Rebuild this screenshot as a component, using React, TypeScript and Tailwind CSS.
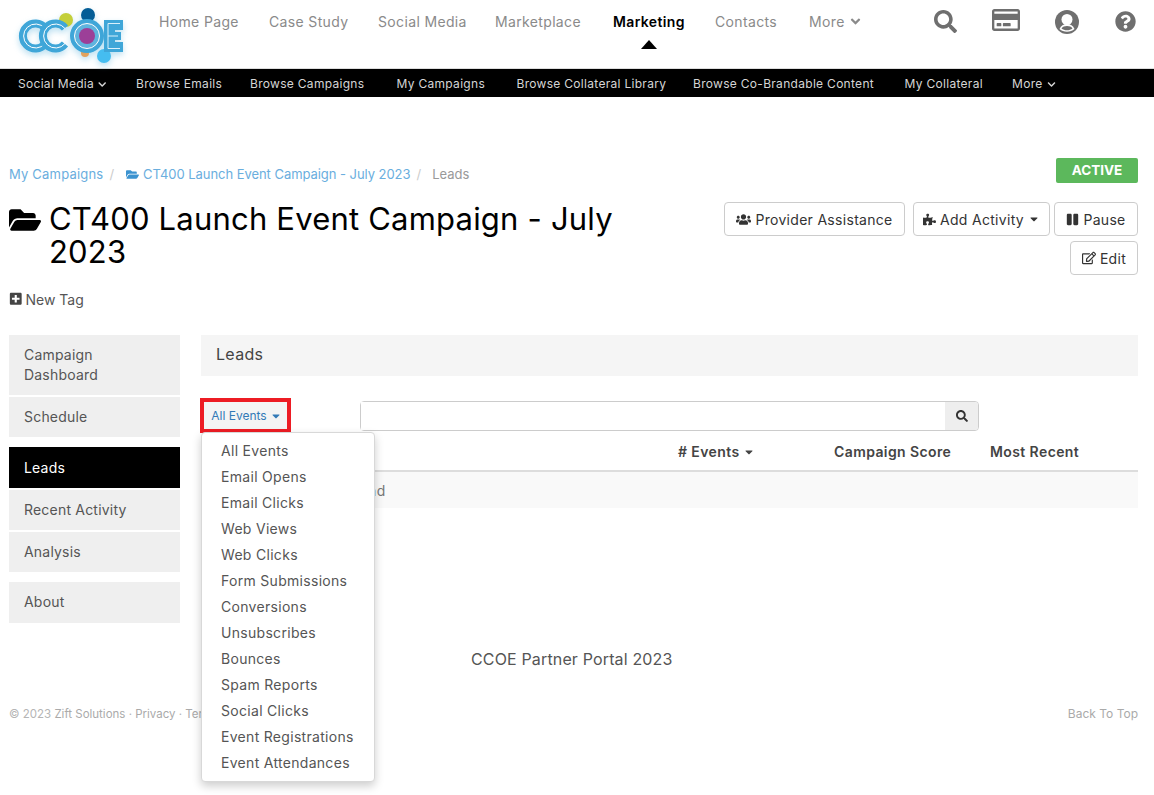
import {
  FaAngleDown,
  FaCaretDown,
  FaChevronDown,
  FaFolderOpen,
  FaPause,
  FaPlusSquare,
  FaPuzzlePiece,
  FaQuestionCircle,
  FaRegCreditCard,
  FaRegEdit,
  FaSearch,
  FaUsers,
} from "react-icons/fa";

const topNav = [
  { label: "Home Page", w: "w-[81px]" },
  { label: "Case Study", w: "w-[80px]" },
  { label: "Social Media", w: "w-[88px]" },
  { label: "Marketplace", w: "w-[87px]" },
];

const subNav = [
  { label: "Social Media", w: "w-[88.5px]", more: true },
  { label: "Browse Emails", w: "w-[84.5px]" },
  { label: "Browse Campaigns", w: "w-[117px]" },
  { label: "My Campaigns", w: "w-[90.5px]" },
  { label: "Browse Collateral Library", w: "w-[147px]" },
  { label: "Browse Co-Brandable Content", w: "w-[182px]" },
  { label: "My Collateral", w: "w-[78px]" },
  { label: "More", w: "w-[48px]", more: true },
];

const menuItems = [
  "All Events",
  "Email Opens",
  "Email Clicks",
  "Web Views",
  "Web Clicks",
  "Form Submissions",
  "Conversions",
  "Unsubscribes",
  "Bounces",
  "Spam Reports",
  "Social Clicks",
  "Event Registrations",
  "Event Attendances",
];

function Logo() {
  return (
    <svg
      width="115"
      height="62"
      viewBox="0 0 115 62"
      className="ml-[16px] mt-[4px] shrink-0 drop-shadow-[0_3px_3px_rgba(63,166,216,0.35)]"
    >
      <circle cx="50" cy="16" r="7" fill="#c4cf3a" />
      <circle cx="72" cy="11" r="7" fill="#045d96" />
      <circle cx="69" cy="49" r="4" fill="#e3a35d" />
      <circle cx="88" cy="52" r="7" fill="#45bdf0" />
      <path d="M29 24A12.500 12.500 0 1 0 29 40" fill="none" stroke="#3fa6d8" strokeWidth="8" />
      <path d="M29 24.500A12 12 0 1 0 29 39.500" fill="none" stroke="#fff" strokeWidth="1" />
      <path d="M49 24A12.500 12.500 0 1 0 49 40" fill="none" stroke="#3fa6d8" strokeWidth="8" />
      <path d="M49 24.500A12 12 0 1 0 49 39.500" fill="none" stroke="#fff" strokeWidth="1" />
      <circle cx="71" cy="32" r="17" fill="#3fa6d8" />
      <circle cx="71" cy="32" r="12.500" fill="#5fb4de" stroke="#fff" strokeWidth="1" />
      <circle cx="71" cy="32" r="8" fill="#9c3f98" />
      <path d="M88 16h19v10h-8v2h6v8h-6v2h8v10H88z" fill="#3fa6d8" />
      <path d="M104 19.500H92v25h12M92 32h10" fill="none" stroke="#d9f0fb" strokeWidth="1" />
    </svg>
  );
}

function UserIcon() {
  return (
    <svg width="24" height="24" viewBox="0 0 24 24">
      <circle cx="12" cy="12" r="12" fill="#6f6f6f" />
      <circle cx="12" cy="9.500" r="5.500" fill="#fff" />
      <path d="M4.500 19c1.500-3.500 4-5 7.500-5s6 1.500 7.500 5c-2 1.800-4.600 2.800-7.500 2.800S6.500 20.800 4.500 19z" fill="#fff" />
      <path d="M6.500 18.500c1.200-1.600 3-2.400 5.500-2.400s4.300.8 5.500 2.400c-1.500 1.200-3.400 1.800-5.500 1.800s-4-.6-5.500-1.800z" fill="#6f6f6f" />
    </svg>
  );
}

function Header() {
  return (
    <header className="flex h-[69px] border-b border-[#ddd] bg-white">
      <Logo />
      <nav className="ml-[28px] flex h-[43px] items-center gap-[29px] text-[14px] tracking-[0.35px] text-[#8a8a8a]">
        {topNav.map((item) => (
          <a key={item.label} className={`${item.w} whitespace-nowrap`}>
            {item.label}
          </a>
        ))}
        <a className="relative ml-[2px] w-[72px] whitespace-nowrap font-semibold text-black">
          Marketing
          <span className="absolute left-[28px] top-[29px] h-0 w-0 border-x-[8px] border-b-[9px] border-x-transparent border-b-black" />
        </a>
        <a className="ml-[1px] w-[63px] whitespace-nowrap">Contacts</a>
        <a className="ml-[2px] flex items-center gap-[3px] whitespace-nowrap">
          More <FaAngleDown className="text-[15px]" />
        </a>
      </nav>
      <div className="ml-auto mr-[18px] flex h-[43px] items-center gap-[35px] text-[#6f6f6f]">
        <FaSearch className="text-[23px]" />
        <FaRegCreditCard className="-mt-[4px] text-[28px]" />
        <UserIcon />
        <FaQuestionCircle className="ml-[1px] text-[21px]" />
      </div>
    </header>
  );
}

function SubNav() {
  return (
    <nav className="flex h-[28px] items-center gap-[29.5px] bg-black pl-[18px] pt-[2px] text-[12px] tracking-[0.3px] text-[#d5d5d5]">
      {subNav.map((item) => (
        <a key={item.label} className={`${item.w} flex items-center gap-[4px] whitespace-nowrap`}>
          {item.label}
          {item.more && <FaChevronDown className="text-[9px]" />}
        </a>
      ))}
    </nav>
  );
}

function Btn({ children, className = "" }: { children: React.ReactNode; className?: string }) {
  return (
    <button
      type="button"
      className={`flex h-[34px] items-center justify-center gap-[4px] rounded-[4px] border border-[#ccc] bg-white text-[14px] tracking-[0.3px] text-[#333] ${className}`}
    >
      {children}
    </button>
  );
}

function SideItem({ children, active, className = "" }: { children: React.ReactNode; active?: boolean; className?: string }) {
  return (
    <a
      className={`flex items-center px-[15px] text-[14px] leading-[20px] tracking-[0.2px] ${
        active ? "bg-black text-white" : "bg-[#efefef] text-[#555]"
      } ${className}`}
    >
      {children}
    </a>
  );
}

export default function App() {
  return (
    <div className="h-[795px] overflow-hidden bg-white font-['Inter','Liberation_Sans',sans-serif] text-[#444]">
      <Header />
      <SubNav />

      <div className="px-[9px] pr-[16px]">
        {/* breadcrumb + status */}
        <div className="mt-[61px] flex h-[25px] items-start justify-between">
          <div className="flex items-center pt-[7px] text-[13px] text-[#6aaede]">
            <a className="tracking-[0.2px]">My Campaigns</a>
            <span className="ml-[6px] mr-[12px] text-[#ccc]">/</span>
            <FaFolderOpen className="mr-[4px] text-[13px] text-[#3c93d0]" />
            <a className="-tracking-[0.05px]">CT400 Launch Event Campaign - July 2023</a>
            <span className="ml-[6px] mr-[11px] text-[#ccc]">/</span>
            <span className="text-[#999]">Leads</span>
          </div>
          <span className="flex h-[25px] w-[82px] items-center justify-center rounded-[2px] bg-[#5cb85c] text-[13.5px] font-bold text-white">
            ACTIVE
          </span>
        </div>

        {/* title + actions */}
        <div className="mt-[19px] flex items-start justify-between">
          <div className="flex w-[630px] gap-[8px]">
            <FaFolderOpen className="mt-[2px] shrink-0 text-[32px] text-black" />
            <h1 className="text-[31px] font-normal leading-[33px] tracking-[0.2px] text-black">
              CT400 Launch Event Campaign - July 2023
            </h1>
          </div>
          <div className="flex w-[414px] flex-wrap justify-end gap-x-[4px] gap-y-[5px]">
            <Btn className="mr-[4px] w-[181px]">
              <FaUsers className="text-[15px]" /> Provider Assistance
            </Btn>
            <Btn className="w-[137px]">
              <FaPuzzlePiece className="text-[13px]" /> Add Activity <FaCaretDown className="text-[12px]" />
            </Btn>
            <Btn className="w-[84px]">
              <FaPause className="text-[13px]" /> Pause
            </Btn>
            <Btn className="w-[68px]">
              <FaRegEdit className="text-[14px]" /> Edit
            </Btn>
          </div>
        </div>

        <div className="mt-[14px] flex h-[20px] items-center gap-[3px] text-[14px] text-[#555]">
          <FaPlusSquare className="text-[13.5px] text-[#444]" /> New Tag
        </div>

        <div className="mt-[25px] flex gap-[21px] pt-[1px]">
          {/* sidebar */}
          <aside className="w-[171px] shrink-0">
            <SideItem className="h-[60px]">
              <span>
                Campaign
                <br />
                Dashboard
              </span>
            </SideItem>
            <SideItem className="mt-[2px] h-[40px]">Schedule</SideItem>
            <SideItem active className="mt-[10px] h-[41px]">
              Leads
            </SideItem>
            <SideItem className="mt-[2px] h-[40px]">Recent Activity</SideItem>
            <SideItem className="mt-[2px] h-[40px]">Analysis</SideItem>
            <SideItem className="mt-[10px] h-[41px] pb-[2px]">About</SideItem>
          </aside>

          {/* main */}
          <main className="relative min-w-0 flex-1">
            <div className="flex h-[41px] items-center bg-[#f5f5f5] px-[15px] pb-[3px] text-[16px] tracking-[0.3px] text-[#444]">
              Leads
            </div>

            <div className="mt-[25px] flex items-start">
              <button
                type="button"
                className="-ml-[1px] -mt-[3px] flex h-[35px] w-[91px] items-center justify-center gap-[3px] border-[4px] border-[#ed1c24] bg-[#f4f4f4] pl-[2px] text-[12px] text-[#337ab7]"
              >
                All Events <FaCaretDown className="text-[12px]" />
              </button>
              <div className="ml-[69px] flex h-[30px] w-[619px] rounded-[4px] border border-[#ccc]">
                <input className="min-w-0 flex-1 bg-white" />
                <span className="flex w-[33px] items-center justify-center rounded-r-[3px] bg-[#eee] text-[#333]">
                  <FaSearch className="text-[12px]" />
                </span>
              </div>
            </div>

            <div className="mt-[9px] flex h-[19px] items-center text-[14px] font-semibold tracking-[0.4px] text-[#444]">
              <span className="ml-[477px] flex w-[156px] items-center gap-[3px]">
                # Events <FaCaretDown className="text-[12px]" />
              </span>
              <span className="w-[156px] whitespace-nowrap">Campaign Score</span>
              <span className="whitespace-nowrap">Most Recent</span>
            </div>
            <div className="mt-[9px] flex h-[38px] items-center border-t-2 border-[#ddd] bg-[#f9f9f9] pl-[12px] text-[14px] tracking-[0.3px] text-[#777]">
              No matching leads found
            </div>

            <p className="mt-[139px] pl-[270px] text-[16px] tracking-[0.15px] text-[#555]">CCOE Partner Portal 2023</p>

            {/* dropdown */}
            <ul className="absolute left-0 top-[97px] w-[174px] rounded-[4px] border border-[#d8d8d8] bg-white py-[5px] text-[14px] tracking-[0.3px] text-[#555] shadow-[0_4px_10px_rgba(0,0,0,0.2)]">
              {menuItems.map((item) => (
                <li key={item} className="h-[26px] whitespace-nowrap pl-[19px] leading-[26px]">
                  {item}
                </li>
              ))}
            </ul>
          </main>
        </div>

        <footer className="mt-[35px] flex justify-between text-[11.5px] leading-[16px] text-[#b5b5b5]">
          <span>
            © 2023 <span className="text-[#aaa]">Zift Solutions</span> · <span className="text-[#aaa]">Privacy</span> ·{" "}
            <span className="text-[#aaa]">Terms</span>
          </span>
          <span className="text-[12px] text-[#aaa]">Back To Top</span>
        </footer>
      </div>
    </div>
  );
}
